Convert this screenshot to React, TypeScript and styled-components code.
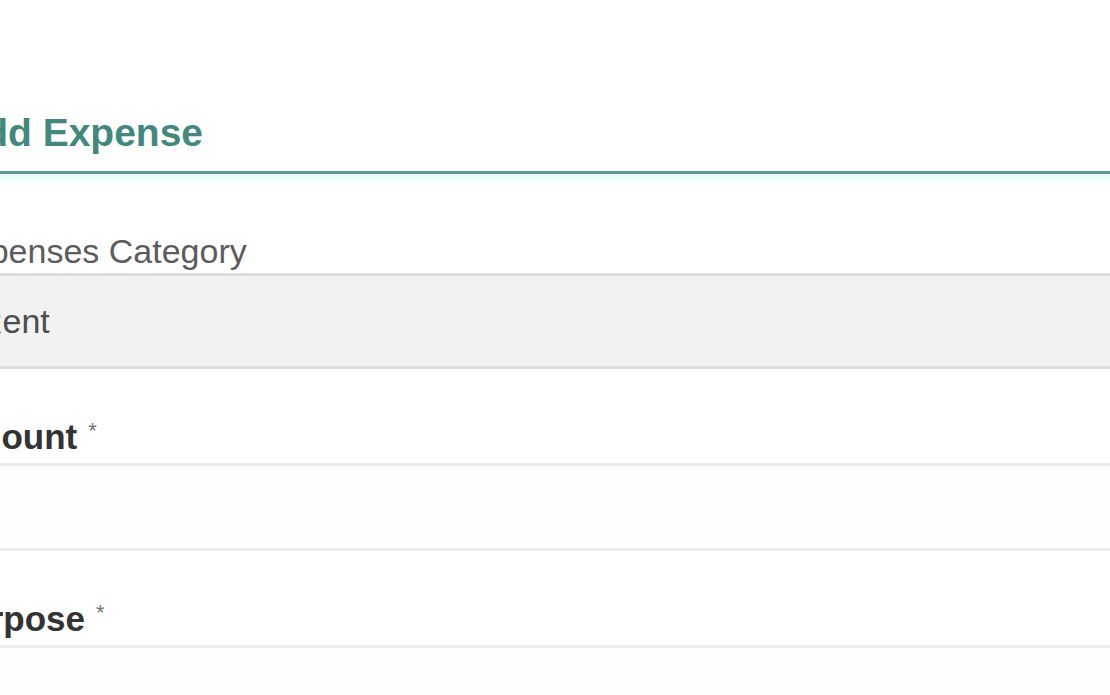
import React from "react";
import styled, { createGlobalStyle } from "styled-components";

const GlobalStyle = createGlobalStyle`
    html, body {
        margin: 0;
        padding: 0;
        background: #ffffff;
        overflow: hidden;
    }
    body {
        font-family: "Liberation Sans", Arial, sans-serif;
    }
`;

const Page = styled.div`
    width: 1230px;
    margin-left: -50px;
    padding-top: 111px;
`;

const Title = styled.h2`
    margin: 0;
    padding: 0 0 16px 6px;
    font-size: 39px;
    line-height: 44px;
    font-weight: bold;
    color: #43887e;
    border-bottom: 3px solid #5b9892;
    box-shadow: 0 8px 14px -8px rgba(170, 240, 240, 0.7);
`;

const Form = styled.form`
    display: flex;
    flex-direction: column;
    padding-top: 58px;
`;

const Field = styled.div<{ $first?: boolean }>`
    display: flex;
    flex-direction: column;
    margin-top: ${(p) => (p.$first ? "0" : "49px")};
`;

const Label = styled.label<{ $plain?: boolean }>`
    display: block;
    font-size: ${(p) => (p.$plain ? "34px" : "35px")};
    line-height: 38px;
    font-weight: ${(p) => (p.$plain ? "normal" : "bold")};
    color: ${(p) => (p.$plain ? "#5c5c5c" : "#333333")};
    margin-bottom: ${(p) => (p.$plain ? "3px" : "7px")};
    margin-left: ${(p) => (p.$plain ? "0" : "-5px")};
`;

const Required = styled.span`
    font-weight: normal;
    color: #777;
    margin-left: 11px;
    font-size: 22px;
    line-height: 0;
    vertical-align: 11px;
`;

const Select = styled.select`
    appearance: none;
    -webkit-appearance: none;
    box-sizing: border-box;
    width: 100%;
    height: 96px;
    padding: 0 28px;
    font-family: "Liberation Sans", Arial, sans-serif;
    font-size: 34px;
    color: #4d4d4d;
    background: #f2f2f2;
    border: none;
    border-top: 3px solid #dddddd;
    border-bottom: 3px solid #dddddd;
    outline: none;
`;

const Input = styled.input`
    box-sizing: border-box;
    width: 100%;
    height: 88px;
    padding: 0 28px;
    font-family: "Liberation Sans", Arial, sans-serif;
    font-size: 34px;
    color: #333;
    background: #fdfdfd;
    border: none;
    border-top: 3px solid #ececec;
    border-bottom: 3px solid #ececec;
    outline: none;
`;

export default function App() {
    return <>
        <GlobalStyle />
        <Page>
            <Title>Add Expense</Title>
            <Form onSubmit={(e) => e.preventDefault()}>
                <Field $first>
                    <Label $plain htmlFor="category">Expenses Category</Label>
                    <Select id="category" defaultValue="rent">
                        <option value="rent">Rent</option>
                        <option value="food">Food</option>
                        <option value="travel">Travel</option>
                    </Select>
                </Field>
                <Field>
                    <Label htmlFor="amount">Amount<Required>*</Required></Label>
                    <Input id="amount" type="text" />
                </Field>
                <Field>
                    <Label htmlFor="purpose">Purpose<Required>*</Required></Label>
                    <Input id="purpose" type="text" />
                </Field>
            </Form>
        </Page>
    </>;
}
